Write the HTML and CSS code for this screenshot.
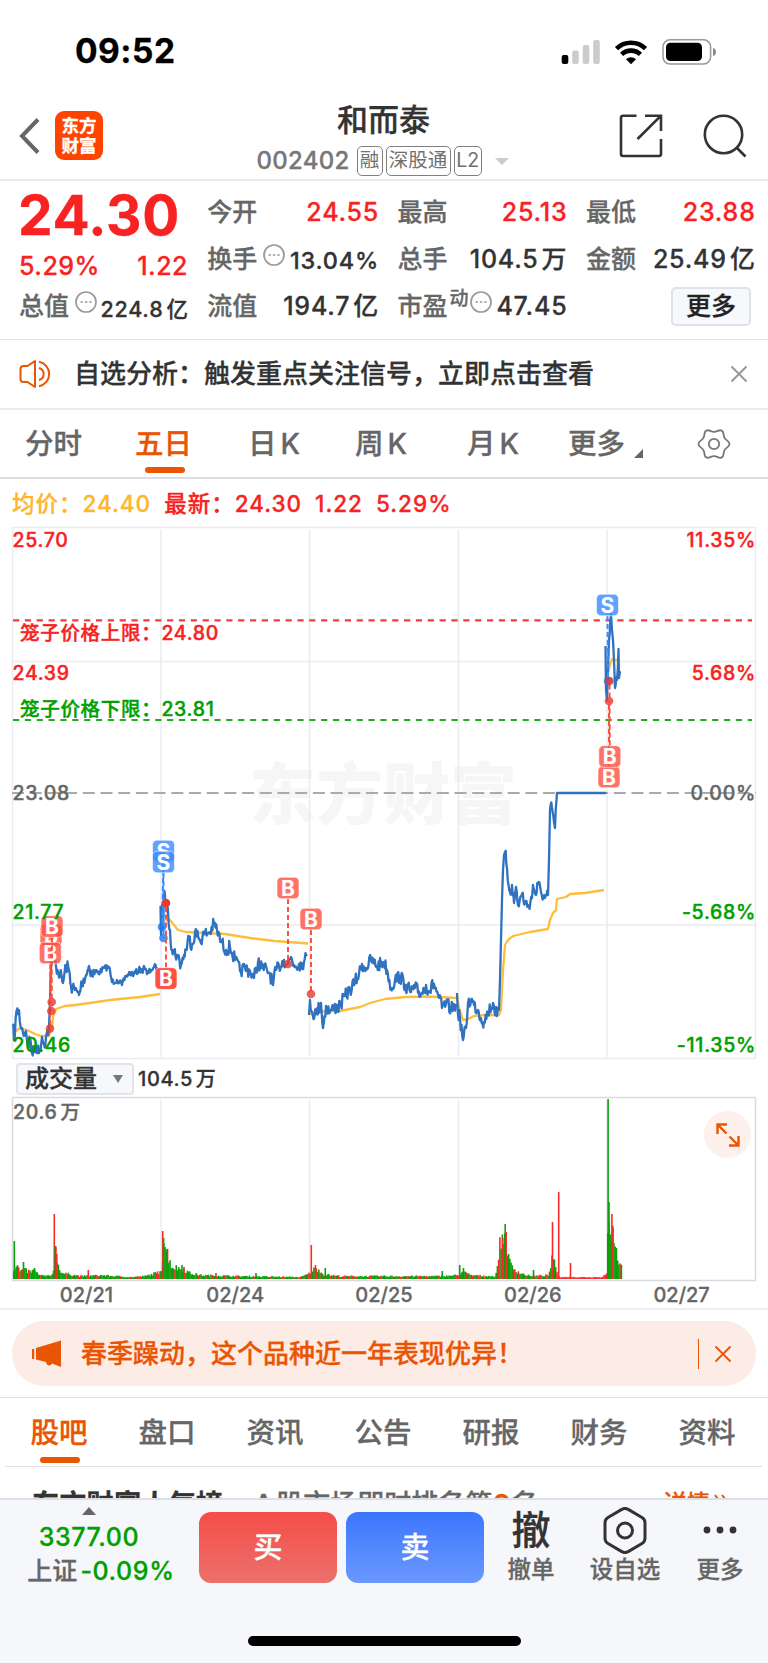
FILE: index.html
```html
<!DOCTYPE html>
<html lang="zh-CN">
<head>
  <meta charset="utf-8">
  <title>和而泰 002402</title>
  <link rel="stylesheet" href="styles.css">
</head>
<body>
  <div class="statusbar">
    <span class="time">09:52</span>
    <svg class="status-icons" width="156" height="28" viewBox="561 37 156 28">
      <rect x="561.7" y="54" width="6.6" height="9" rx="2"/>
      <g fill="#ccc">
        <rect x="572.2" y="49.5" width="6.6" height="13.5" rx="2"/>
        <rect x="582.7" y="44" width="6.6" height="19" rx="2"/>
        <rect x="593.2" y="39" width="6.6" height="24" rx="2"/>
      </g>
      <g fill="none" stroke="#000" stroke-width="4.6">
        <path d="M616.5 47.6a21 21 0 0 1 29 0"/>
        <path d="M621.6 53.4a13.5 13.5 0 0 1 18.8 0"/>
      </g>
      <path d="M626 58.3a7.2 7.2 0 0 1 10 0l-5 5z"/>
      <rect x="663" y="38.8" width="47.6" height="24.2" rx="7" fill="none" stroke="#999" stroke-width="1.5"/>
      <rect x="666" y="41.8" width="36" height="18.2" rx="4.5"/>
      <path d="M713 47c4 1 4 7 0 8z" fill="#888"/>
    </svg>
  </div>

  <header class="header">
    <div class="header-left">
      <svg width="22" height="38" viewBox="0 0 22 38"><path d="M20 2.500L4 19l16 16.500" fill="none" stroke="#666" stroke-width="4"/></svg>
      <div class="logo"><span>东方</span><span>财富</span></div>
    </div>
    <div class="stock">
      <h1>和而泰</h1>
      <div class="code">
        <span class="num">002402</span>
        <span class="tag tag-rong">融</span>
        <span class="tag tag-sgt">深股通</span>
        <span class="tag tag-l2">L2</span>
        <i class="caret"></i>
      </div>
    </div>
    <div class="header-right">
      <svg width="44" height="44" viewBox="0 0 44 44" fill="none" stroke="#333" stroke-width="2.6">
        <path d="M17.500 1.700H4a2 2 0 0 0-2 2V40a2 2 0 0 0 2 2h36a2 2 0 0 0 2-2V25"/>
        <path d="M26 1.700h16V17M42 1.700L18.500 25"/>
      </svg>
      <svg width="44" height="44" viewBox="0 0 44 44" fill="none" stroke="#333" stroke-width="2.6">
        <circle cx="20.500" cy="20.500" r="18.700"/><path d="M33.500 33.500l9 9"/>
      </svg>
    </div>
  </header>

  <section class="quote">
    <div class="col col-price">
      <div class="price">24.30</div>
      <div class="row change"><span>5.29%</span><span>1.22</span></div>
      <div class="row small"><label>总值</label><svg class="dots" viewBox="0 0 22 22"><circle cx="11" cy="11" r="10"/><path d="M5.500 11h2.400m2 0h2.400m2 0h2.400"/></svg><b>224.8<u>亿</u></b></div>
    </div>
    <div class="col">
      <div class="row"><label>今开</label><b class="red">24.55</b></div>
      <div class="row mid"><label>换手</label><svg class="dots" viewBox="0 0 22 22"><circle cx="11" cy="11" r="10"/><path d="M5.500 11h2.400m2 0h2.400m2 0h2.400"/></svg><b>13.04%</b></div>
      <div class="row"><label>流值</label><b>194.7<u>亿</u></b></div>
    </div>
    <div class="col">
      <div class="row"><label>最高</label><b class="red">25.13</b></div>
      <div class="row"><label>总手</label><b>104.5<u>万</u></b></div>
      <div class="row"><label>市盈</label><sup>动</sup><svg class="dots" viewBox="0 0 22 22"><circle cx="11" cy="11" r="10"/><path d="M5.500 11h2.400m2 0h2.400m2 0h2.400"/></svg><b>47.45</b></div>
    </div>
    <div class="col">
      <div class="row"><label>最低</label><b class="red">23.88</b></div>
      <div class="row"><label>金额</label><b>25.49<u>亿</u></b></div>
      <div class="row"><button class="more-btn">更多</button></div>
    </div>
  </section>

  <div class="alert">
    <svg width="34" height="30" viewBox="0 0 34 30" fill="none" stroke="#ea5504" stroke-width="2">
      <path d="M16 2v26L8.500 23H4.500a3 3 0 0 1-3-3V10a3 3 0 0 1 3-3h4z" stroke-linejoin="round"/>
      <path d="M20 9a6.200 6.200 0 0 1 0 12M20 2.800a12.400 12.400 0 0 1 0 24.400"/>
    </svg>
    <p>自选分析：触发重点关注信号，立即点击查看</p>
    <svg width="18" height="18" viewBox="0 0 18 18"><path d="M1.500 1.500l15 15m0-15l-15 15" stroke="#999" stroke-width="2"/></svg>
  </div>

  <nav class="period">
    <a>分时</a>
    <a class="active">五日</a>
    <a>日<u>K</u></a>
    <a>周<u>K</u></a>
    <a>月<u>K</u></a>
    <a class="more">更多<i></i></a>
    <svg width="34" height="32" viewBox="-17 -16 34 32" fill="none" stroke="#777" stroke-width="1.800">
      <path d="M-7.750 -13.400C-5.100 -14.900 -3.500 -12.200 0 -12.200S5.100 -14.900 7.750 -13.400C10.350 -11.870 8.800 -9.100 10.570 -6.100S15.500 -3 15.500 0S12.300 3.070 10.570 6.100S10.350 11.870 7.750 13.400S3.500 12.200 0 12.200S-5.100 14.900 -7.750 13.400S-8.800 9.100 -10.570 6.100S-15.450 3.030 -15.500 0S-12.300 -3.070 -10.570 -6.100S-10.350 -11.870 -7.750 -13.400Z"/>
      <circle r="5.200"/>
    </svg>
  </nav>

  <div class="legend">
    <span class="avg">均价：24.40</span>
    <span>最新：24.30</span>
    <span>1.22</span>
    <span>5.29%</span>
  </div>

  <svg class="chart" id="price" width="768" height="534" viewBox="0 526 768 534">
    <text class="watermark" x="249" y="819">东方财富</text>
    <g class="grid">
      <path d="M161 530V1057M309.500 530V1057M458.500 530V1057M607 530V1057M12 661.500H756M12 925H756"/>
      <rect x="12.500" y="527.500" width="743" height="531"/>
    </g>
    <path class="dash-grey" d="M12 793H756"/>
    <path class="dash-red" d="M13 620.300H752"/>
    <path class="dash-green" d="M13 720H752"/>
    <g id="lines"></g>
    <g id="marks"></g>
    <g class="axis">
      <text class="r" x="12.500" y="547">25.70</text>
      <text class="r" x="12.500" y="680">24.39</text>
      <text class="k" x="12.500" y="800">23.08</text>
      <text class="g" x="12.500" y="919">21.77</text>
      <text class="g" x="12.500" y="1051.500">20.46</text>
      <g text-anchor="end">
        <text class="r" x="756" y="547">11.35%</text>
        <text class="r" x="756" y="680">5.68%</text>
        <text class="k" x="756" y="800">0.00%</text>
        <text class="g" x="756" y="919">-5.68%</text>
        <text class="g" x="756" y="1051.500">-11.35%</text>
      </g>
      <text class="r" x="20" y="640">笼子价格上限：24.80</text>
      <text class="g" x="20" y="716">笼子价格下限：23.81</text>
    </g>
  </svg>

  <div class="volume-head">
    <button class="select">成交量<i></i></button>
    <span>104.5<u>万</u></span>
  </div>

  <div class="volume">
    <svg class="chart" id="vol" width="768" height="186" viewBox="0 1096 768 186">
      <g class="grid">
        <path d="M161 1100V1279M309.500 1100V1279M458.500 1100V1279M607 1100V1279"/>
        <rect class="frame" x="12.500" y="1097.500" width="743" height="183"/>
      </g>
      <g id="bars"></g>
      <g class="axis"><text class="k" x="13" y="1119">20.6<tspan dx="3">万</tspan></text></g>
    </svg>
    <div class="expand">
      <svg width="24" height="24" viewBox="0 0 24 24" fill="none" stroke="#ea5504" stroke-width="2.400">
        <path d="M1.500 11V1.500H11M1.500 1.500l9 9M22.500 13v9.500H13M22.500 22.500l-9-9"/>
      </svg>
    </div>
  </div>
  <div class="dates">
    <span>02/21</span><span>02/24</span><span>02/25</span><span>02/26</span><span>02/27</span>
  </div>

  <div class="banner-wrap">
    <div class="banner">
      <svg width="32" height="28" viewBox="0 0 32 28" fill="#ea5504">
        <path d="M1 9h2.200v10H1zM5 8L30 .500V27L21 23.500c-1 2-3 2.500-4.500 1.500-1-1-1.500-2-1.500-3l-10-2.500z"/>
      </svg>
      <p>春季躁动，这个品种近一年表现优异！</p>
      <i></i>
      <svg width="18" height="18" viewBox="0 0 18 18"><path d="M1.500 1.500l15 15m0-15l-15 15" stroke="#ea5504" stroke-width="1.800"/></svg>
    </div>
  </div>

  <nav class="tabs">
    <a class="active">股吧</a><a>盘口</a><a>资讯</a><a>公告</a><a>研报</a><a>财务</a><a>资料</a>
  </nav>

  <div class="rank">
    <strong>东方财富人气榜</strong>
    <span>A<u>股</u>市场即时排名第<em>2</em>名</span>
    <a>详情<svg width="16" height="18" viewBox="0 0 16 18" fill="none" stroke="#ea5504" stroke-width="2"><path d="M1 1l6 8-6 8M8 1l6 8-6 8"/></svg></a>
  </div>

  <footer class="toolbar">
    <div class="index">
      <i></i>
      <div class="green">3377.00</div>
      <div>上证<span class="green"><u>-0.09%</u></span></div>
    </div>
    <button class="trade buy">买</button>
    <button class="trade sell">卖</button>
    <div class="tool tool-cancel"><div class="glyph">撤</div><span>撤单</span></div>
    <div class="tool tool-fav">
      <div class="glyph">
        <svg width="44" height="47" viewBox="0 0 44 47" fill="none" stroke="#333" stroke-width="3">
          <path d="M18.800 2.400L5 10.500a6 6 0 0 0-3 5.200v15.600a6 6 0 0 0 3 5.200l13.800 8.100a6 6 0 0 0 6.400 0L39 36.500a6 6 0 0 0 3-5.200V15.700a6 6 0 0 0-3-5.200L25.200 2.400a6 6 0 0 0-6.400 0z"/>
          <circle cx="22" cy="23.500" r="7.500"/>
        </svg>
      </div>
      <span>设自选</span>
    </div>
    <div class="tool tool-more">
      <div class="glyph"><svg width="34" height="8" viewBox="0 0 34 8" fill="#333"><circle cx="4" cy="4" r="3.400"/><circle cx="17" cy="4" r="3.400"/><circle cx="30" cy="4" r="3.400"/></svg></div>
      <span>更多</span>
    </div>
    <div class="home"></div>
  </footer>
  <script src="chart.js"></script>
</body>
</html>
```
FILE: styles.css
```css
* {
  box-sizing: border-box;
}

body {
  margin: 0;
  width: 768px;
  height: 1663px;
  overflow: hidden;
  background: #fff;
  color: #333;
  font-family: Inter, "Noto Sans CJK SC", sans-serif;
  font-weight: 500;
  line-height: 1;
  -webkit-text-stroke: .3px;
}

h1, p {
  margin: 0;
}

svg {
  display: block;
  flex: none;
}

button {
  font-family: inherit;
  padding: 0;
  line-height: 1;
}

/* small gap between latin and chinese characters */
u {
  text-decoration: none;
  margin-left: 3px;
}

.green {
  color: #00a000;
}

.red {
  color: #f82222;
}

/* status bar */
.statusbar {
  height: 102px;
  display: flex;
  justify-content: space-between;
  align-items: center;
  padding: 1px 51px 0 75px;
  color: #000;
}

.time {
  font-size: 33.5px;
  font-weight: 700;
  letter-spacing: .5px;
}

/* header */
.header {
  height: 79px;
  display: grid;
  grid-template-columns: 236px 1fr 236px;
  border-bottom: 2px solid #ebebeb;
}

.header-left,
.header-right {
  display: flex;
  align-items: center;
  height: 67px;
}

.header-left {
  padding-left: 18px;
}

.header-right {
  justify-content: flex-end;
  padding-right: 21px;
  gap: 40px;
}

.logo {
  width: 48px;
  height: 49px;
  margin-left: 15px;
  border-radius: 9px;
  background: #ff4400;
  color: #fff;
  display: flex;
  flex-direction: column;
  align-items: center;
  justify-content: center;
  gap: 3px;
  font-size: 17.5px;
  font-weight: 700;
}

.stock {
  display: flex;
  flex-direction: column;
  align-items: center;
}

.stock h1 {
  font-size: 31px;
  font-weight: 500;
  margin: 2px 0 0 -1px;
}

.code {
  display: flex;
  align-items: center;
  margin: 11px 0 0 -3px;
  white-space: nowrap;
}

.code .num {
  font-size: 24px;
  color: #777;
  margin-right: 7px;
  letter-spacing: .3px;
}

.tag {
  height: 30px;
  border: 1px solid #808080;
  border-radius: 5px;
  margin-right: 3px;
  font-size: 19.5px;
  font-weight: 400;
  color: #707070;
  display: flex;
  align-items: center;
  justify-content: center;
  -webkit-text-stroke: 0;
}

.tag-rong {
  width: 26px;
}

.tag-sgt {
  width: 65px;
}

.tag-l2 {
  width: 28px;
}

.caret {
  margin-left: 10px;
  border: 7.5px solid transparent;
  border-top-color: #ccc;
  border-bottom: 0;
}

/* quote */
.quote {
  height: 159px;
  padding: 8px 13px 0 19px;
  display: grid;
  grid-template-columns: 169px 171px 169px 169px;
  column-gap: 19.3px;
  border-bottom: 1px solid #e4e4e4;
}

.row {
  height: 47px;
  display: flex;
  align-items: center;
  justify-content: space-between;
  font-size: 25px;
  white-space: nowrap;
}

.row label {
  color: #666;
  flex: none;
}

.row b {
  font-weight: 500;
  margin-left: auto;
  letter-spacing: .8px;
  margin-right: -.8px;
}

.row sup {
  font-size: 19px;
  color: #666;
  align-self: flex-start;
  margin-top: 6px;
  margin-left: 2px;
}

.dots {
  width: 22px;
  height: 22px;
  margin: -9px 0 0 1px;
  fill: none;
  stroke: #999;
  stroke-width: 1.7;
}

label + .dots {
  margin-left: 6px;
}

.row.mid b {
  font-size: 23.5px;
  margin-top: 3px;
}

.row.small b {
  font-size: 21.5px;
  margin-top: 6px;
}

.price {
  height: 53px;
  line-height: 53px;
  font-size: 55px;
  font-weight: 700;
  color: #f82222;
  letter-spacing: .6px;
  margin-left: -1px;
}

.row.change {
  height: 41px;
  padding-top: 8px;
  color: #f82222;
  letter-spacing: .5px;
}

.more-btn {
  width: 80px;
  height: 39px;
  margin: 0 4px 0 auto;
  border: 2px solid #dfe2e8;
  border-radius: 5px;
  background: #f6f8fb;
  color: #222;
  font-size: 25px;
  font-weight: 500;
}

/* alert */
.alert {
  height: 70px;
  display: flex;
  align-items: center;
  padding: 0 20px 0 19px;
  border-bottom: 2px solid #ebebeb;
}

.alert p {
  flex: 1;
  margin-left: 21px;
  font-size: 26px;
}

/* period tabs */
.period {
  height: 69px;
  display: flex;
  align-items: center;
  border-bottom: 2px solid #dcdde2;
  padding: 1px 0 0 25px;
  font-size: 28.5px;
  color: #666;
}

.period a {
  position: relative;
  white-space: nowrap;
  width: 110px;
}

.period a:nth-child(3) {
  margin-left: 3px;
  width: 107px;
}

.period a:nth-child(4) {
  width: 112px;
}

.period a:nth-child(5) {
  width: 101px;
}

.period u {
  margin-left: 4px;
}

.period .more {
  width: 129px;
  display: flex;
  align-items: flex-end;
}

.period .more i {
  margin-left: 9px;
  border-left: 9px solid transparent;
  border-bottom: 9px solid #666;
}

.period .active {
  color: #ea5504;
}

.period .active::after {
  content: "";
  position: absolute;
  left: 10px;
  top: 37px;
  width: 40px;
  height: 6px;
  border-radius: 3px;
  background: #ea5504;
}

/* legend */
.legend {
  height: 47px;
  display: flex;
  align-items: center;
  gap: 13px;
  padding: 3px 12px 0;
  font-size: 22.5px;
  letter-spacing: 1px;
  color: #f82222;
}

.legend .avg {
  color: #ffb62b;
}

/* charts */
.grid path,
.grid rect {
  fill: none;
  stroke: #e9ebf0;
  stroke-width: 1.5;
}

.grid .frame {
  stroke: #d9dbe1;
}

.watermark {
  font-size: 67px;
  font-weight: 900;
  fill: #f6f6f7;
  -webkit-text-stroke: 0;
}

.axis {
  font-size: 19.5px;
  letter-spacing: .7px;
  -webkit-text-stroke: 0;
}

.axis text {
  stroke-width: .4;
}

.axis .r {
  fill: #f82222;
  stroke: #f82222;
}

.axis .g {
  fill: #00a000;
  stroke: #00a000;
}

.axis .k {
  fill: #666;
  stroke: #666;
}

.dash-grey {
  stroke: #aaa;
  stroke-width: 2;
  stroke-dasharray: 12 5.7;
}

.dash-red {
  stroke: #f43c3c;
  stroke-width: 2.2;
  stroke-dasharray: 6.2 5.65;
}

.dash-green {
  stroke: #22ac22;
  stroke-width: 2.2;
  stroke-dasharray: 6.2 5.65;
}

.line {
  fill: none;
  stroke-width: 2.3;
  stroke-linejoin: round;
}

.line.now {
  stroke: #2f72c0;
}

.line.mean {
  stroke: #ffbd3c;
}

.mark rect {
  stroke: #fff;
  stroke-width: .6;
}

.mark text {
  fill: #fff;
  font-size: 21px;
  font-weight: 700;
  text-anchor: middle;
  -webkit-text-stroke: 0;
}

.mark path {
  stroke-width: 2;
  stroke-dasharray: 5 3;
}

/* volume */
.volume-head {
  height: 36px;
  display: flex;
  align-items: center;
  padding: 1px 0 0 16px;
  font-size: 20px;
  letter-spacing: .6px;
  gap: 4px;
}

.select {
  width: 118px;
  height: 32px;
  border: 2px solid #e2e4ea;
  border-radius: 4px;
  background: #f6f8fb;
  color: #333;
  font-size: 24px;
  font-weight: 500;
  display: flex;
  align-items: center;
  padding-left: 7px;
}

.select i {
  margin-left: 16px;
  border: 5px solid transparent;
  border-top: 8px solid #777;
  border-bottom: 0;
}

.volume {
  position: relative;
}

.expand {
  position: absolute;
  left: 704px;
  top: 15px;
  width: 47px;
  height: 47px;
  border-radius: 50%;
  background: #fef0ea;
  display: flex;
  align-items: center;
  justify-content: center;
}

.dates {
  height: 28px;
  padding: 0 12px;
  display: grid;
  grid-template-columns: repeat(5, 1fr);
  align-items: center;
  text-align: center;
  font-size: 20px;
  color: #666;
  border-bottom: 2px solid #eee;
}

/* banner */
.banner-wrap {
  height: 88px;
  padding: 11px 12px;
  border-bottom: 1px solid #e0e0e0;
}

.banner {
  height: 65px;
  border-radius: 32px;
  background: #fdece5;
  color: #ea5504;
  display: flex;
  align-items: center;
  padding: 0 24px 0 19px;
}

.banner p {
  flex: 1;
  margin-left: 18px;
  font-size: 26px;
}

.banner i {
  width: 1.5px;
  height: 30px;
  margin-right: 15px;
  background: #ea5504;
}

/* bottom tabs */
.tabs {
  height: 69px;
  margin: 0 6px 0 5px;
  padding-top: 3px;
  display: grid;
  grid-template-columns: repeat(7, 108px);
  align-items: center;
  text-align: center;
  font-size: 28.5px;
  color: #666;
  border-bottom: 1px solid #e0e0e0;
}

.tabs a {
  position: relative;
}

.tabs .active {
  color: #ea5504;
}

.tabs .active::after {
  content: "";
  position: absolute;
  left: 35px;
  top: 38px;
  width: 40px;
  height: 6px;
  border-radius: 3px;
  background: #ea5504;
}

.rank {
  height: 31px;
  overflow: hidden;
  display: flex;
  padding: 24px 38px 0 32px;
  font-size: 27.3px;
  color: #666;
  white-space: nowrap;
}

.rank strong {
  width: 222px;
  color: #333;
  font-weight: 700;
}

.rank span {
  flex: 1;
  font-size: 27px;
}

.rank em,
.rank a {
  font-style: normal;
  color: #ea5504;
}

.rank em {
  font-weight: 700;
  margin: 0 1px;
}

.rank a {
  display: flex;
  font-size: 23.5px;
  margin-top: 1px;
}

.rank a svg {
  margin: 2px 0 0 4px;
}

/* toolbar */
.toolbar {
  position: relative;
  height: 166px;
  border-top: 2px solid #dcdfe4;
  background: #f6f7fa;
  display: flex;
  align-items: flex-start;
}

.index {
  width: 178px;
  margin-right: 21px;
  padding-top: 7px;
  font-size: 25px;
  color: #666;
  display: flex;
  flex-direction: column;
  align-items: center;
  white-space: nowrap;
}

.index i {
  border: 7.5px solid transparent;
  border-bottom: 8px solid #666;
  border-top: 0;
}

.index div:nth-child(2) {
  margin-top: 10px;
}

.index div:nth-child(3) {
  margin: 9px 0 0 24px;
}

.index .green {
  font-size: 25px;
  letter-spacing: .6px;
}

.trade {
  width: 138px;
  height: 71px;
  margin: 12px 9px 0 0;
  border: 0;
  border-radius: 12px;
  color: #fff;
  font-size: 29px;
  font-weight: 500;
}

.buy {
  background: linear-gradient(#f54d48, #ec716c);
}

.sell {
  background: linear-gradient(#3b76fb, #6a98ff);
}

.tool {
  display: flex;
  flex-direction: column;
  align-items: center;
  font-size: 23.5px;
  color: #666;
  padding-top: 7px;
}

.tool span {
  margin-top: 1px;
}

.glyph {
  height: 50px;
  display: flex;
  align-items: center;
  font-size: 39px;
  color: #333;
}

.tool-cancel {
  width: 76px;
}

.tool-cancel .glyph {
  padding-bottom: 6px;
}

.tool-fav {
  width: 112px;
}

.tool-fav .glyph {
  padding-bottom: 4px;
}

.tool-more .glyph {
  padding-bottom: 4px;
}

.tool-more {
  width: 78px;
}

.home {
  position: absolute;
  left: 248px;
  top: 136px;
  width: 273px;
  height: 10px;
  border-radius: 5px;
  background: #000;
}
```
FILE: chart.js
```js
const NS = 'http://www.w3.org/2000/svg';

function add(parent, tag, attrs, text) {
  const el = document.createElementNS(NS, tag);
  for (const k in attrs) el.setAttribute(k, attrs[k]);
  if (text) el.textContent = text;
  parent.appendChild(el);
  return el;
}

let seed = 7;
function rnd() {
  seed = (seed * 16807) % 2147483647;
  return seed / 2147483647;
}

// one array per trading day: x, y, x, y, ...
const now = [
  [12.5,1024,14,1040,16.5,1011,18,1014,19,1010,20.5,1026,23,1033,26,1031,28,1045,30,1038,32,1053,34,1052,36,1045,39,1053,42,1037,44,1044,46,1037,49,1028,50,1000,51,965,53,955,56,966,60,974,63,983,66,965,69,970,71,986,75,990,79,995,82,982,86,975,89,966,92,974,97,972,100,972,104,968,109,967,112,982,117,980,122,985,126,976,130,973,134,974,140,969,142,972,144,966,147,974,151,970,154,967,157,967],
  [160.5,906,161,935,162,905,163,930,164,893,166,903,168,912,170,930,172,950,174,952,177,955,181,965,184,955,186,950,189,937,192,945,195,932,200,940,205,934,210,932,214,924,217,930,221,942,226,950,230,947,235,960,240,971,245,968,250,971,254,978,258,962,262,968,267,970,270,974,273,985,276,970,279,966,284,960,288,964,291,957,294,965,299,964,304,962,307,956],
  [309,1015,310,1000,312,1012,316,1014,321,1003,323,1028,326,1006,330,1012,334,1008,340,1006,345,996,350,990,355,982,359,974,362,964,366,968,371,960,377,966,384,962,387,970,391,988,395,980,400,976,405,985,411,992,415,988,421,994,426,985,429,991,434,984,439,998,442,1008,446,1004,451,1009,456,1004],
  [457,993,458,1015,460,1018,463,1040,466,1028,468,1003,471,1000,474,1005,478,1010,481,1018,484,1022,488,1012,493,1003,497,1016,499,1010,500,980,501,940,502,900,503,870,504,855,505,852,507,868,508.5,885,510,892,512,885,514,903,516,887,518,905,522,894,525,903,528,906,532,898,533,885,536,895,538,884,541,892,545,898,548,895,549,860,550,810,552,808,554,822,555,828,556.5,800],
  [605.5,646,606,690,607,700,608,670,609,640,611,614,612,630,613,640,614,660,615,688,617,680,618.5,649,619,678,620,671]
];

const mean = [
  [13,1034,16,1031,20,1028,27,1030,35,1034,41,1036,49,1036,52,1027,53,1017,56,1009,65,1006,75,1005,90,1003,110,1000,140,997,160,994],
  [165,920,170,920,178,930,186,932,205,933,225,934,250,938,275,941,308,943.5],
  [309,1014,325,1011,340,1011,350,1009,360,1007,370,1003,385,999,405,997,430,996.5,456,998],
  [457,997,459,1007,463,1020,468,1019,474,1016,485,1015,499,1015,501,1010,503,970,505,945,508,940,513,936,530,932,548,929,550,920,553,913,556,910,557,899,566,897,570,894,585,893,604,890],
  [608,672,610,665,612,659,616,660,619,659]
];

const lines = document.getElementById('lines');
mean.forEach(d => add(lines, 'polyline', { class: 'line mean', points: d.join(' ') }));

// fill in the minute ticks between the turning points
now.forEach((d, day) => {
  const pts = [];
  for (let i = 0; i < d.length - 2; i += 2) {
    const [x0, y0, x1, y1] = d.slice(i, i + 4);
    pts.push(x0, y0);
    const n = Math.round((x1 - x0) / 0.8);
    for (let j = 1; j < n; j++) {
      const t = j / n;
      const amp = day === 0 && x0 > 95 ? 6 : 14;
      pts.push(x0 + (x1 - x0) * t, y0 + (y1 - y0) * t + (rnd() - 0.5) * amp);
    }
  }
  pts.push(d[d.length - 2], d[d.length - 1]);
  if (day === 3) pts.push(557, 793, 606, 793);
  add(lines, 'polyline', { class: 'line now', points: pts.map(p => p.toFixed(1)).join(' ') });
});

// trade marks: type, badge centre x, badge centre y, dot x, dot y, opacity
const marks = [
  ['B', 51, 935, 51.7, 1002, 0.8],
  ['B', 50.3, 953, 50, 1028.5, 0.8],
  ['B', 52, 926.5, 51.3, 1011, 0.8],
  ['S', 163.5, 851, 162, 927, 0.8],
  ['S', 163.5, 862, 163.5, 938, 0.8],
  ['B', 166, 978.5, 166, 903, 1],
  ['B', 288, 888, 288, 964, 0.8],
  ['B', 311, 919, 311, 994, 0.8],
  ['S', 607.5, 605, 608, 681, 0.8],
  ['B', 609, 777, 609, 701, 0.8],
  ['B', 609.8, 756.5, 609.5, 681, 0.8]
];

const layer = document.getElementById('marks');
marks.forEach(([type, x, y, dx, dy, op]) => {
  const color = type === 'B' ? '#ff5040' : '#3a8bff';
  const g = add(layer, 'g', { class: 'mark' });
  add(g, 'path', { d: `M${x} ${y + (dy > y ? 11 : -11)}L${dx} ${dy}`, stroke: color });
  add(g, 'circle', { cx: dx, cy: dy, r: 4.3, fill: type === 'B' ? '#e8392d' : '#1a78f0', 'fill-opacity': op });
  add(g, 'rect', { x: x - 11, y: y - 10.8, width: 22, height: 21.6, rx: 4.5, fill: color, 'fill-opacity': op });
  add(g, 'text', { x: x, y: y + 7.6 }, type);
});

// volume envelope: x, height
const env = [13,10,14,14,17,14,19,8,22,10,25,9,29,8,35,9,38,4,50,3,53,10,54,36,56,26,58,12,62,6,70,5,80,3,100,4,130,2,144,3,158,7,161,12,163,42,166,30,168,24,171,13,176,12,183,10,190,6,200,4,240,3,300,2,309,6,312,10,318,11,322,5,340,3,440,3,458,4,461,8,470,4,492,3,495,2,498,30,502,48,505,40,508,20,512,12,520,6,530,3,548,4,551,20,554,16,557,6,560,2,600,2,606,5,607,45,609,60,612,48,614,36,616,26,619,16,622,11];
// isolated peaks: x, height, colour
const peaks = [[14.3,38,'g'],[23.5,17,'g'],[34.5,11,'g'],[54.3,65,'r'],[55.2,33,'g'],[56.8,25,'r'],[88.3,9,'r'],[162.7,48,'r'],[163.6,41,'g'],[167,30,'g'],[182,14,'g'],[184,12,'r'],[216,6,'r'],[256,6,'g'],[311.3,34,'r'],[315.5,14,'r'],[325.3,11,'g'],[442.3,8,'g'],[459.7,14,'g'],[463.5,11,'g'],[502.8,41,'r'],[505.2,55,'g'],[506.2,47,'r'],[533.5,9,'g'],[552.5,57,'r'],[558.7,87,'r'],[570.5,16,'r'],[608.1,180,'g'],[609,77,'g'],[611.9,65,'r'],[613,51,'r']];

function heightAt(x) {
  for (let i = 0; i < env.length - 2; i += 2) {
    if (x < env[i + 2]) {
      return env[i + 1] + (env[i + 3] - env[i + 1]) * (x - env[i]) / (env[i + 2] - env[i]);
    }
  }
  return 0;
}

const bars = document.getElementById('bars');
const paint = { r: '#fa2a2a', g: '#0aa00a' };
function bar(x, h, c) {
  add(bars, 'rect', { x: x.toFixed(2), y: (1279 - h).toFixed(1), width: 1.6, height: h.toFixed(1), fill: paint[c] });
}
for (let x = 13; x < 621.5; x += 1.24) {
  const allRed = x > 557 && x < 607;
  bar(x, Math.max(1.4, heightAt(x) * (0.65 + rnd() * 0.55)), allRed || rnd() > 0.72 ? 'r' : 'g');
}
peaks.forEach(p => bar(p[0] - 0.8, p[1], p[2]));
```
